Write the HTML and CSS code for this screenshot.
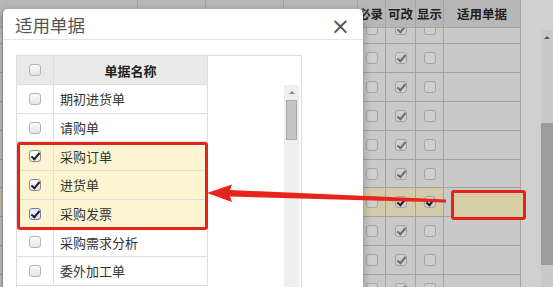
FILE: index.html
```html
<!DOCTYPE html>
<html lang="zh-CN">
<head>
    <meta charset="UTF-8">
    <title>适用单据</title>
    <link rel="stylesheet" href="styles.css">
</head>
<body>
    <div class="page">
        <!-- background grid (dimmed by the modal) -->
        <div class="bg">
            <div class="bg-table">
                <div class="row head">
                    <div class="c1"></div><div class="c2"></div><div class="c3"></div><div class="c4"></div>
                    <div class="c5">必录</div><div class="c6">可改</div><div class="c7">显示</div><div class="c8">适用单据</div>
                </div>
                <div class="row part">
                    <div class="c1"></div><div class="c2"></div><div class="c3"></div><div class="c4"></div>
                    <div class="c5"><span class="cb"></span></div><div class="c6"><span class="cb on"></span></div><div class="c7"><span class="cb"></span></div><div class="c8"></div>
                </div>
                <div class="row">
                    <div class="c1"></div><div class="c2"></div><div class="c3"></div><div class="c4"></div>
                    <div class="c5"><span class="cb"></span></div><div class="c6"><span class="cb on"></span></div><div class="c7"><span class="cb"></span></div><div class="c8"></div>
                </div>
                <div class="row">
                    <div class="c1"></div><div class="c2"></div><div class="c3"></div><div class="c4"></div>
                    <div class="c5"><span class="cb"></span></div><div class="c6"><span class="cb on"></span></div><div class="c7"><span class="cb"></span></div><div class="c8"></div>
                </div>
                <div class="row">
                    <div class="c1"></div><div class="c2"></div><div class="c3"></div><div class="c4"></div>
                    <div class="c5"><span class="cb"></span></div><div class="c6"><span class="cb on"></span></div><div class="c7"><span class="cb"></span></div><div class="c8"></div>
                </div>
                <div class="row">
                    <div class="c1"></div><div class="c2"></div><div class="c3"></div><div class="c4"></div>
                    <div class="c5"><span class="cb"></span></div><div class="c6"><span class="cb on"></span></div><div class="c7"><span class="cb"></span></div><div class="c8"></div>
                </div>
                <div class="row">
                    <div class="c1"></div><div class="c2"></div><div class="c3"></div><div class="c4"></div>
                    <div class="c5"><span class="cb"></span></div><div class="c6"><span class="cb on"></span></div><div class="c7"><span class="cb"></span></div><div class="c8"></div>
                </div>
                <div class="row sel">
                    <div class="c1"></div><div class="c2"></div><div class="c3"></div><div class="c4"></div>
                    <div class="c5"><span class="cb"></span></div><div class="c6"><span class="cb on dark"></span></div><div class="c7"><span class="cb on dark"></span></div><div class="c8 plain"></div>
                </div>
                <div class="row">
                    <div class="c1"></div><div class="c2"></div><div class="c3"></div><div class="c4"></div>
                    <div class="c5"><span class="cb"></span></div><div class="c6"><span class="cb on"></span></div><div class="c7"><span class="cb"></span></div><div class="c8"></div>
                </div>
                <div class="row">
                    <div class="c1"></div><div class="c2"></div><div class="c3"></div><div class="c4"></div>
                    <div class="c5"><span class="cb"></span></div><div class="c6"><span class="cb on"></span></div><div class="c7"><span class="cb"></span></div><div class="c8"></div>
                </div>
                <div class="row">
                    <div class="c1"></div><div class="c2"></div><div class="c3"></div><div class="c4"></div>
                    <div class="c5"><span class="cb"></span></div><div class="c6"><span class="cb on"></span></div><div class="c7"><span class="cb"></span></div><div class="c8"></div>
                </div>
            </div>
            <div class="bg-side">
                <div class="vscroll">
                    <span class="up"></span>
                    <span class="thumb"></span>
                </div>
            </div>
        </div>

        <!-- modal -->
        <div class="dialog">
            <div class="dialog-head">
                <span class="dialog-title">适用单据</span>
                <span class="close">&times;</span>
            </div>
            <div class="dialog-body">
                <div class="list-box">
                    <div class="list">
                        <div class="lrow lhead"><div class="lchk"><span class="box"></span></div><div class="lname">单据名称</div></div>
                        <div class="lrow"><div class="lchk"><span class="box"></span></div><div class="lname">期初进货单</div></div>
                        <div class="lrow"><div class="lchk"><span class="box"></span></div><div class="lname">请购单</div></div>
                        <div class="lrow hl"><div class="lchk"><span class="box on"></span></div><div class="lname">采购订单</div></div>
                        <div class="lrow hl"><div class="lchk"><span class="box on"></span></div><div class="lname">进货单</div></div>
                        <div class="lrow hl"><div class="lchk"><span class="box on focus"></span></div><div class="lname">采购发票</div></div>
                        <div class="lrow"><div class="lchk"><span class="box"></span></div><div class="lname">采购需求分析</div></div>
                        <div class="lrow"><div class="lchk"><span class="box"></span></div><div class="lname">委外加工单</div></div>
                    </div>
                    <div class="lscroll">
                        <span class="up"></span>
                        <span class="thumb"></span>
                    </div>
                </div>
            </div>
        </div>

        <!-- annotations -->
        <div class="mark mark-list"></div>
        <div class="mark mark-cell"></div>
        <svg class="arrow" width="553" height="287" viewBox="0 0 553 287">
            <polygon points="207,193 232,184.5 230,190 446,199.5 446,202.5 230,196.5 232,202" fill="#e8231c"/>
        </svg>
    </div>
</body>
</html>
```

FILE: styles.css
```css
* {
    box-sizing: border-box;
    margin: 0;
    padding: 0;
}

body {
    font-family: "Noto Sans CJK SC", "Noto Sans", sans-serif;
    color: #333;
    background: #cdcdcd;
}

.page {
    position: relative;
    width: 553px;
    height: 287px;
    overflow: hidden;
}

/* ---- background grid ---- */
.bg {
    display: flex;
    height: 100%;
}

.bg-table {
    width: 521px;
    background: #c9c9c9;
}

.row {
    display: flex;
    height: 28.9px;
}

.row > div {
    border-right: 1px solid #a3a3a3;
    border-bottom: 1px solid #a3a3a3;
    display: flex;
    align-items: center;
    justify-content: center;
    overflow: hidden;
}

.c1 { width: 138px; }
.c2 { width: 68px; }
.c3 { width: 78px; }
.c4 { width: 74px; }
.c5 { width: 28px; }
.c6 { width: 30px; }
.c7 { width: 28px; }
.c8 { width: 77px; }

.row.head {
    height: 28px;
    background: #b7b7b7;
    font-size: 12.5px;
    font-weight: bold;
    color: #222;
    white-space: nowrap;
}

.row.head .c5 { justify-content: flex-start; }

.row.part {
    height: 16px;
}

.row.part > div {
    align-items: flex-start;
}

.row.part .cb {
    margin-top: -5px;
}

.row.sel > div {
    background: #d3cba9;
}

.row.sel > .c8.plain {
    background: #c9c9c9;
}

.cb {
    position: relative;
    width: 12px;
    height: 12px;
    border: 1px solid #a4a4a4;
    border-radius: 3px;
    background: #cfcfcf;
}

.cb.on::after {
    content: "";
    position: absolute;
    left: 3px;
    top: 0;
    width: 3px;
    height: 7px;
    border-right: 2px solid #6d6d6d;
    border-bottom: 2px solid #6d6d6d;
    transform: rotate(40deg);
}

.cb.on.dark::after {
    border-color: #1e1e1e;
}

.bg-side {
    flex: 1;
    display: flex;
    justify-content: flex-end;
    background: #d0d0d0;
    padding-top: 30px;
}

.vscroll {
    width: 12px;
    display: flex;
    flex-direction: column;
    align-items: center;
    background: #c9c9c9;
}

.vscroll .up {
    margin-top: 6px;
    border-left: 3px solid transparent;
    border-right: 3px solid transparent;
    border-bottom: 3px solid #555;
}

.vscroll .thumb {
    margin-top: 84px;
    width: 12px;
    height: 142px;
    background: #9d9d9d;
}

/* ---- dialog ---- */
.dialog {
    position: absolute;
    left: 2px;
    top: 9px;
    width: 361px;
    height: 300px;
    background: #fff;
    border-radius: 5px 5px 0 0;
    border-left: 1px solid #8a8a8a;
    box-shadow: 0 3px 9px rgba(0, 0, 0, 0.35);
}

.dialog-head {
    display: flex;
    align-items: center;
    justify-content: space-between;
    height: 31px;
    padding: 0 13px 0 12px;
    border-bottom: 1px solid #e5e5e5;
}

.dialog-title {
    font-size: 17.5px;
    color: #555;
}

.close {
    margin-top: 4px;
    font-family: "DejaVu Sans", sans-serif;
    font-size: 23px;
    line-height: 1;
    color: #555;
}

.dialog-body {
    padding: 15px 0 0 13px;
}

.list-box {
    display: flex;
    justify-content: space-between;
    width: 286px;
    height: 260px;
    border: 1px solid #dcdcdc;
    border-bottom: none;
}

.list {
    width: 191px;
}

.lrow {
    display: flex;
    height: 28.7px;
    border-bottom: 1px solid #dedede;
    font-size: 13px;
    color: #333;
}

.lrow.hl {
    background: #fdf5d2;
}

.lhead {
    height: 29px;
    background: #e9e9e9;
    font-weight: bold;
    color: #222;
}

.lchk {
    width: 37px;
    display: flex;
    align-items: center;
    justify-content: center;
    border-right: 1px solid #dedede;
}

.lname {
    flex: 1;
    display: flex;
    align-items: center;
    padding-left: 6px;
    border-right: 1px solid #dedede;
}

.lhead .lname {
    justify-content: center;
    padding-left: 0;
}

.box {
    position: relative;
    width: 12px;
    height: 12px;
    border: 1px solid #b5b5b5;
    border-radius: 3px;
    background: linear-gradient(#fafafa, #e6e6e6);
}

.box.on {
    border-color: #8d8d8d;
    background: linear-gradient(#fff, #ececec);
}

.box.focus {
    border-color: #6c7fb8;
    background: linear-gradient(#f2f5ff, #d9e0f2);
}

.box.on::after {
    content: "";
    position: absolute;
    left: 3px;
    top: 0;
    width: 3px;
    height: 7px;
    border-right: 2px solid #222;
    border-bottom: 2px solid #222;
    transform: rotate(40deg);
}

.lscroll {
    width: 15px;
    margin: 29px 2px 0 0;
    display: flex;
    flex-direction: column;
    align-items: center;
    background: #efefef;
}

.lscroll .up {
    margin-top: 6px;
    border-left: 3px solid transparent;
    border-right: 3px solid transparent;
    border-bottom: 3px solid #888;
}

.lscroll .thumb {
    margin-top: 6px;
    width: 11px;
    height: 40px;
    background: #c4c4c4;
    border: 1px solid #aaa;
}

/* ---- annotations ---- */
.mark {
    position: absolute;
    border: 3px solid #e5231b;
    border-radius: 3px;
}

.mark-list {
    left: 17px;
    top: 142px;
    width: 191px;
    height: 88px;
}

.mark-cell {
    left: 451px;
    top: 190px;
    width: 75px;
    height: 30px;
    background: #d6cea7;
}

.arrow {
    position: absolute;
    left: 0;
    top: 0;
    pointer-events: none;
}
```
